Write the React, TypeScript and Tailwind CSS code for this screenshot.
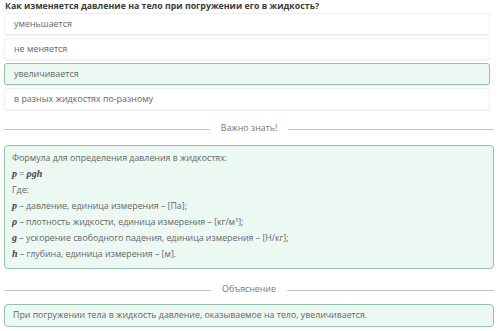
import React from "react";

const options = [
  { text: "уменьшается", correct: false },
  { text: "не меняется", correct: false },
  { text: "увеличивается", correct: true },
  { text: "в разных жидкостях по-разному", correct: false },
];

const M: React.FC<{ children: React.ReactNode }> = ({ children }) => (
  <span className="font-['Liberation_Serif',serif] italic font-bold text-[10px] text-[#444]">
    {children}
  </span>
);

const Divider: React.FC<{ label: string }> = ({ label }) => (
  <div className="flex items-center gap-[11px] h-[16px]">
    <div className="flex-1 h-px bg-[#c4c4c4]" />
    <span className="text-[8.8px] text-[#777]">{label}</span>
    <div className="flex-1 h-px bg-[#c4c4c4]" />
  </div>
);

export default function App() {
  return (
    <div className="w-[500px] h-[331px] bg-white overflow-hidden font-['Open_Sans',sans-serif] text-[#666]">
      <div className="px-[5px] pt-[1px] text-[8.8px] font-bold text-[#3a3a3a] leading-[11px]">
        Как изменяется давление на тело при погружении его в жидкость?
      </div>
      <div className="px-[4px] mt-[1px] flex flex-col gap-[3px] w-[494px]">
        {options.map((o) => (
          <div
            key={o.text}
            className={
              o.correct
                ? "h-[22px] flex items-center px-[9px] text-[8.9px] rounded-[3px] border border-[#93c2ad] bg-[#ecf9f3] shadow-[0_1px_1px_rgba(0,0,0,0.08)]"
                : "h-[22px] flex items-center px-[9px] text-[8.9px] rounded-[3px] border border-[#f0f0f0] bg-white shadow-[0_1px_1px_rgba(0,0,0,0.06)]"
            }
          >
            {o.text}
          </div>
        ))}
      </div>

      <div className="px-[4px] w-[498px] mt-[11px]">
        <Divider label="Важно знать!" />
      </div>

      <div className="mx-[4px] w-[490px] mt-[8px] rounded-[4px] border border-[#93c2ad] bg-[#ecf9f3] px-[7px] pt-[4px] pb-[6px] text-[8.8px] leading-[16px]">
        <div>Формула для определения давления в жидкостях:</div>
        <div>
          <M>p</M> = <M>ρgh</M>
        </div>
        <div>Где:</div>
        <div>
          <M>p</M> – давление, единица измерения – [Па];
        </div>
        <div>
          <M>ρ</M> – плотность жидкости, единица измерения – [кг/м<sup className="text-[5.5px]">3</sup>];
        </div>
        <div>
          <M>g</M> – ускорение свободного падения, единица измерения – [Н/кг];
        </div>
        <div>
          <M>h</M> – глубина, единица измерения – [м].
        </div>
      </div>

      <div className="px-[4px] w-[498px] mt-[13px]">
        <Divider label="Объяснение" />
      </div>

      <div className="mx-[4px] w-[490px] mt-[6px] h-[23px] flex items-center rounded-[4px] border border-[#93c2ad] bg-[#ecf9f3] px-[8px] text-[8.8px]">
        При погружении тела в жидкость давление, оказываемое на тело, увеличивается.
      </div>
    </div>
  );
}
